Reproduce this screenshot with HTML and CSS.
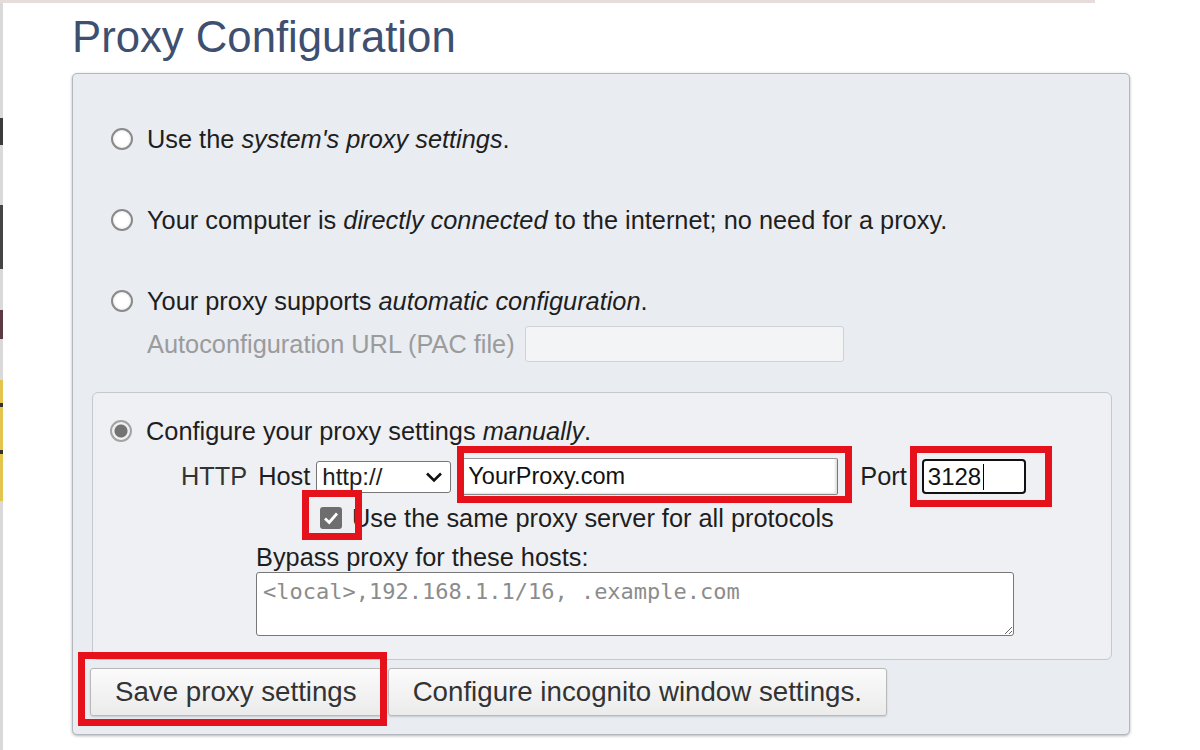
FILE: index.html
```html
<!DOCTYPE html>
<html lang="en">

<head>
    <meta charset="UTF-8">
    <meta name="viewport" content="width=device-width, initial-scale=1.0">
    <title>Proxy Configuration</title>
    <link rel="stylesheet" href="styles.css">
</head>

<body>
    <div class="top-strip"></div>
    <div class="page">
        <div class="edge"></div>
        <div class="content">
            <h1 class="title">Proxy Configuration</h1>

            <form class="panel">
                <label class="option">
                    <input type="radio" name="mode" class="radio">
                    <span>Use the <em>system's proxy settings</em>.</span>
                </label>
                <label class="option">
                    <input type="radio" name="mode" class="radio">
                    <span>Your computer is <em>directly connected</em> to the internet; no need for a proxy.</span>
                </label>
                <label class="option auto">
                    <input type="radio" name="mode" class="radio">
                    <span>Your proxy supports <em>automatic configuration</em>.</span>
                </label>
                <div class="pac-row">
                    <span>Autoconfiguration URL (PAC file)</span>
                    <input type="text" class="pac-input" disabled>
                </div>

                <!-- manual settings box -->
                <div class="manual">
                    <label class="option manual-option">
                        <input type="radio" name="mode" class="radio" checked>
                        <span>Configure your proxy settings <em>manually</em>.</span>
                    </label>

                    <div class="host-row">
                        <span class="lbl-http">HTTP</span>
                        <span class="lbl-host">Host</span>
                        <div class="select">
                            <span>http://</span>
                            <svg width="18" height="12" viewBox="0 0 18 12">
                                <path d="M2 2.5 L9 9.5 L16 2.5" fill="none" stroke="#111" stroke-width="2.6" />
                            </svg>
                        </div>
                        <span class="mark mark-host">
                            <input type="text" class="host-input" value="YourProxy.com">
                        </span>
                        <span class="lbl-port">Port</span>
                        <span class="mark mark-port">
                            <span class="port-input">3128<span class="caret"></span></span>
                        </span>
                    </div>

                    <label class="same-row">
                        <span class="mark mark-check">
                            <span class="check">
                                <svg width="22" height="22" viewBox="0 0 22 22">
                                    <path d="M5 11.5 L9.2 15.5 L17 6.5" fill="none" stroke="#fff" stroke-width="2.8" />
                                </svg>
                            </span>
                        </span>
                        <span>Use the same proxy server for all protocols</span>
                    </label>

                    <div class="bypass">
                        <div class="bypass-label">Bypass proxy for these hosts:</div>
                        <textarea class="bypass-input" placeholder="<local>,192.168.1.1/16, .example.com"></textarea>
                    </div>
                </div>

                <div class="actions">
                    <span class="mark mark-save">
                        <button type="button" class="btn btn-save">Save proxy settings</button>
                    </span>
                    <button type="button" class="btn btn-incognito">Configure incognito window settings.</button>
                </div>
            </form>
        </div>
    </div>
</body>

</html>
```

FILE: styles.css
```css
body {
    margin: 0;
    background: #fff;
    font-family: "Liberation Sans", Arial, sans-serif;
    color: #1e1e1e;
}

.top-strip {
    width: 1095px;
    height: 3px;
    background: #e6dcdc;
}

.page {
    display: flex;
    min-height: 747px;
}

/* thin strip of the window behind */
.edge {
    width: 3px;
    flex: none;
    background: linear-gradient(to bottom,
            #d9d9d9 0 115px, #3b3b3b 115px 142px, #d9d9d9 142px 202px,
            #444 202px 266px, #d9d9d9 266px 307px, #5b3a44 307px 336px,
            #d9d9d9 336px 377px, #e3c54d 377px 400px, #333 400px 404px,
            #e3c54d 404px 447px, #333 447px 451px, #e3c54d 451px 498px,
            #d9d9d9 498px);
}

.content {
    padding-left: 69px;
}

.title {
    font-size: 43.7px;
    font-weight: normal;
    line-height: 50px;
    margin: 9px 0 11px 0;
    color: #3e4f70;
}

.panel {
    width: 1058px;
    box-sizing: border-box;
    border: 1px solid #b3b7be;
    border-radius: 5px;
    background: #e9ecf1;
    box-shadow: 0 1px 3px rgba(0, 0, 0, 0.3);
    padding: 50px 17px 18px 19px;
}

.option {
    display: flex;
    align-items: center;
    gap: 14px;
    height: 30px;
    line-height: 30px;
    font-size: 25.35px;
    margin-left: 19px;
    margin-bottom: 51px;
}

.option em {
    font-style: italic;
}

.option.auto {
    margin-bottom: 10px;
}

.radio {
    appearance: none;
    margin: 0;
    width: 22px;
    height: 22px;
    flex: none;
    box-sizing: border-box;
    border-radius: 50%;
    border: 2px solid #8a8a8a;
    background: radial-gradient(circle, #fff 0 6px, #f2f2f2 9px);
}

.radio:checked {
    border-color: #a3a3a3;
    background: radial-gradient(circle, #737373 0 6px, #f0f0f0 7px);
}

.pac-row {
    display: flex;
    align-items: center;
    gap: 10px;
    height: 36px;
    margin-left: 55px;
    margin-bottom: 30px;
    font-size: 25.35px;
    color: #9b9b9b;
}

.pac-input {
    width: 319px;
    height: 36px;
    box-sizing: border-box;
    border: 1px solid #cfd2d6;
    border-radius: 3px;
    background: #f3f4f6;
}

.manual {
    border: 1px solid #c5c8cd;
    border-radius: 6px;
    background: #eef0f4;
    padding: 23px 17px 23px 17px;
}

.option.manual-option {
    margin-left: 0;
    margin-bottom: 12px;
}

.host-row {
    display: flex;
    align-items: center;
    height: 37px;
    margin-left: 71px;
    font-size: 25.35px;
}

.lbl-http {
    color: #333;
    margin-right: 11px;
}

.lbl-host {
    margin-right: 6px;
}

.select {
    width: 135px;
    height: 32px;
    box-sizing: border-box;
    display: flex;
    align-items: center;
    justify-content: space-between;
    padding: 0 7px 0 5px;
    border: 1px solid #767676;
    border-radius: 3px;
    background: #fff;
    font-size: 24px;
    margin-right: 11px;
}

.mark {
    position: relative;
    display: inline-flex;
}

/* red highlight frames */
.mark::after {
    content: "";
    position: absolute;
    border: 7px solid #e5121b;
    pointer-events: none;
}

.mark-host {
    margin-right: 22px;
}

.mark-host::after {
    inset: -12px -14px -8px -5px;
}

.host-input {
    width: 376px;
    height: 37px;
    box-sizing: border-box;
    margin: 0;
    padding: 0 5px;
    border: 1px solid #9a9a9a;
    border-right-color: #777;
    border-bottom-color: #888;
    border-radius: 2px;
    box-shadow: inset -2px -1px 2px rgba(0, 0, 0, 0.12);
    background: #fff;
    font-family: "Liberation Sans", Arial, sans-serif;
    font-size: 23.5px;
    color: #111;
}

.lbl-port {
    margin-right: 15px;
}

.mark-port::after {
    inset: -13px -26px -13px -12px;
}

.port-input {
    width: 104px;
    height: 35px;
    box-sizing: border-box;
    display: flex;
    align-items: center;
    padding-left: 4px;
    border: 2px solid #111;
    border-radius: 4px;
    background: #fff;
    font-size: 24px;
    color: #111;
}

.caret {
    width: 1px;
    height: 26px;
    margin-left: 2px;
    background: #000;
}

.same-row {
    display: flex;
    align-items: center;
    gap: 10px;
    height: 30px;
    margin-top: 8px;
    margin-left: 210px;
    font-size: 25.35px;
}

.mark-check::after {
    inset: -17px -20px -11px -18px;
}

.check {
    width: 22px;
    height: 22px;
    border-radius: 3px;
    background: #6e6e6e;
    display: flex;
}

.bypass {
    margin-top: 10px;
    margin-left: 146px;
}

.bypass-label {
    font-size: 25.35px;
    line-height: 29px;
}

.bypass-input {
    display: block;
    width: 758px;
    height: 64px;
    box-sizing: border-box;
    margin: 0;
    padding: 6px 6px;
    border: 1px solid #777;
    border-radius: 3px;
    background: #fff;
    font-family: "DejaVu Sans Mono", monospace;
    font-size: 22px;
}

.bypass-input::placeholder {
    color: #8c8c8c;
}

.actions {
    display: flex;
    gap: 6px;
    margin: 8px 0 0 -2px;
}

.mark-save::after {
    inset: -16px -5px -10px -12px;
}

.btn {
    height: 48px;
    margin: 0;
    padding: 0 24px;
    border: 1px solid #b9b9b9;
    border-radius: 3px;
    background: linear-gradient(#fbfbfb, #ebebeb);
    box-shadow: 0 1px 2px rgba(0, 0, 0, 0.15);
    font-family: "Liberation Sans", Arial, sans-serif;
    font-size: 27.7px;
    color: #333;
}
```
